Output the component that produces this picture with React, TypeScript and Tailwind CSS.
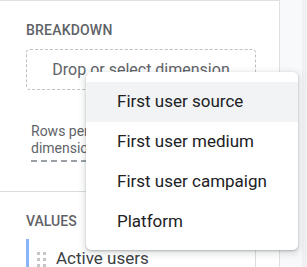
const menuItems = ["First user source", "First user medium", "First user campaign", "Platform"];

export default function App() {
  return (
    <div
      className="relative w-[307px] h-[267px] overflow-hidden bg-[#f8f9fa] flex"
      style={{ fontFamily: "Roboto, 'Liberation Sans', sans-serif" }}
    >
      <div className="w-[280px] h-full bg-white border-r border-t border-[#e0e0e0] flex flex-col shrink-0">
        <div className="pl-[26px] pt-[21px]">
          <div className="text-[14px] font-medium text-[#5f6368] tracking-[0.2px] leading-[16px]">BREAKDOWN</div>
          <div className="mt-[11px] w-[230px] h-[41px] rounded-[4px] border border-dashed border-[#bdc1c6] flex items-center justify-center text-[16px] text-[#5f6368]">
            Drop or select dimension
          </div>
          <div className="mt-[33px] ml-[5px] w-[66px] text-[14px] leading-[17px] text-[#5f6368] pb-[3px] border-b-2 border-dashed border-[#9aa0a6]">
            Rows per dimension
          </div>
        </div>
        <div className="mt-[29px] border-t border-[#dadce0]" />
        <div className="pl-[26px] pt-[21px]">
          <div className="text-[14px] font-medium text-[#5f6368] leading-[16px]">VALUES</div>
          <div className="mt-[10px] w-[230px] h-[40px] border-l-[3px] border-l-[#8ab4f8] border-r border-r-[#dadce0] flex items-center">
            <div className="ml-[8px] grid grid-cols-2 gap-x-[3px] gap-y-[3px]">
              {[0, 1, 2, 3, 4, 5].map((i) => (
                <span key={i} className="w-[3px] h-[3px] bg-[#c4c7c5]" />
              ))}
            </div>
            <span className="ml-[10px] text-[17px] text-[#3c4043]">Active users</span>
          </div>
        </div>
      </div>
      <div className="ml-auto w-[5px] h-full bg-[#eef0f1]" />

      <div className="absolute left-[86px] top-[72px] w-[212px] bg-white rounded-[5px] pt-[10px] pb-[8px] shadow-[0_2px_6px_2px_rgba(60,64,67,0.15),0_1px_2px_rgba(60,64,67,0.3)]">
        {menuItems.map((item, i) => (
          <div
            key={item}
            className={`h-[40px] pl-[31px] flex items-center text-[17px] text-[#202124] ${i === 0 ? "bg-[#f1f3f4]" : ""}`}
          >
            {item}
          </div>
        ))}
      </div>
    </div>
  );
}
